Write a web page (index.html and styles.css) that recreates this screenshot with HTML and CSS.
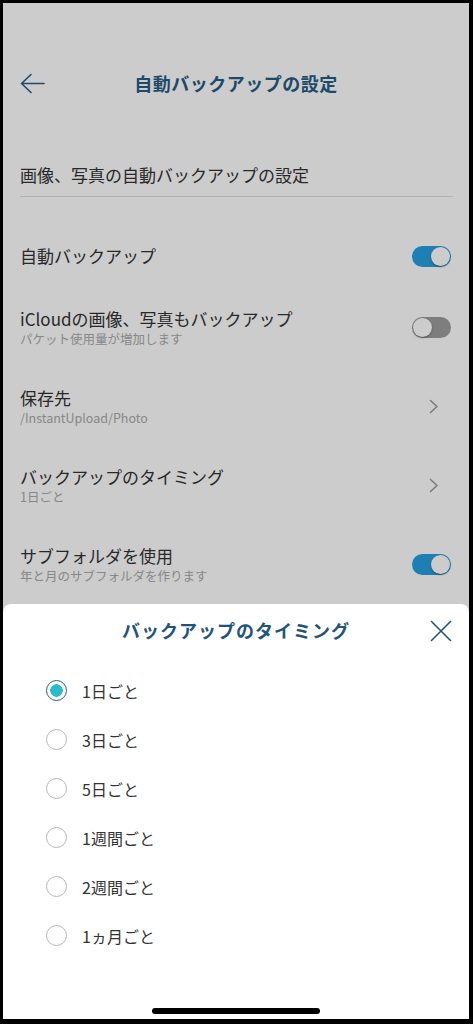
FILE: index.html
```html
<!DOCTYPE html>
<html lang="ja">
<head>
    <meta charset="UTF-8">
    <meta name="viewport" content="width=device-width, initial-scale=1.0">
    <title>自動バックアップの設定</title>
    <link rel="stylesheet" href="styles.css">
</head>
<body>
    <div class="screen">
        <div class="page">
            <header class="nav">
                <div class="nav-back">
                    <svg width="25" height="21" viewBox="0 0 25 21">
                        <path d="M24 10.5 H2 M11 1.5 L1.5 10.5 L11 19.5" fill="none" stroke="currentColor" stroke-width="1.6" stroke-linecap="round" stroke-linejoin="round"/>
                    </svg>
                </div>
                <h1 class="nav-title">自動バックアップの設定</h1>
                <div></div>
            </header>

            <section class="settings">
                <h2 class="settings-heading">画像、写真の自動バックアップの設定</h2>
                <ul class="setting-list">
                    <li class="setting-row">
                        <div class="setting-text">
                            <span class="setting-label">自動バックアップ</span>
                        </div>
                        <span class="toggle is-on"></span>
                    </li>
                    <li class="setting-row">
                        <div class="setting-text">
                            <span class="setting-label">iCloudの画像、写真もバックアップ</span>
                            <span class="setting-sub">パケット使用量が増加します</span>
                        </div>
                        <span class="toggle"></span>
                    </li>
                    <li class="setting-row">
                        <div class="setting-text">
                            <span class="setting-label">保存先</span>
                            <span class="setting-sub">/InstantUpload/Photo</span>
                        </div>
                        <svg class="chevron" width="10" height="15" viewBox="0 0 10 15">
                            <path d="M1.5 1.5 L8 7.5 L1.5 13.5" fill="none" stroke="currentColor" stroke-width="1.5" stroke-linecap="round" stroke-linejoin="round"/>
                        </svg>
                    </li>
                    <li class="setting-row">
                        <div class="setting-text">
                            <span class="setting-label">バックアップのタイミング</span>
                            <span class="setting-sub">1日ごと</span>
                        </div>
                        <svg class="chevron" width="10" height="15" viewBox="0 0 10 15">
                            <path d="M1.5 1.5 L8 7.5 L1.5 13.5" fill="none" stroke="currentColor" stroke-width="1.5" stroke-linecap="round" stroke-linejoin="round"/>
                        </svg>
                    </li>
                    <li class="setting-row">
                        <div class="setting-text">
                            <span class="setting-label">サブフォルダを使用</span>
                            <span class="setting-sub">年と月のサブフォルダを作ります</span>
                        </div>
                        <span class="toggle is-on"></span>
                    </li>
                </ul>
            </section>
        </div>

        <div class="dim"></div>

        <div class="sheet">
            <h2 class="sheet-title">バックアップのタイミング</h2>
            <div class="sheet-close">
                <svg width="22" height="22" viewBox="0 0 22 22">
                    <path d="M1.5 1.5 L20.5 20.5 M20.5 1.5 L1.5 20.5" fill="none" stroke="currentColor" stroke-width="1.6" stroke-linecap="round"/>
                </svg>
            </div>
            <ul class="radio-list">
                <li class="radio-item is-checked"><span class="radio"></span>1日ごと</li>
                <li class="radio-item"><span class="radio"></span>3日ごと</li>
                <li class="radio-item"><span class="radio"></span>5日ごと</li>
                <li class="radio-item"><span class="radio"></span>1週間ごと</li>
                <li class="radio-item"><span class="radio"></span>2週間ごと</li>
                <li class="radio-item"><span class="radio"></span>1ヵ月ごと</li>
            </ul>
            <div class="home-bar"></div>
        </div>
    </div>
</body>
</html>
```

FILE: styles.css
```css
body {
    margin: 0;
    padding: 3px 4px 5px 3px;
    background: #000;
    font-family: "Noto Sans CJK JP", "Noto Sans", sans-serif;
    color: #333;
}
ul {
    list-style: none;
    margin: 0;
    padding: 0;
}
.screen {
    position: relative;
    width: 466px;
    height: 1016px;
    background: #fff;
    overflow: hidden;
}

/* nav bar */
.nav {
    display: grid;
    grid-template-columns: 1fr auto 1fr;
    align-items: center;
    height: 56px;
    margin-top: 52px;
    padding: 0 17px;
    color: #275c85;
}
.nav-back {
    display: flex;
    align-items: center;
}
.nav-title {
    margin: 0;
    font-size: 18px;
    font-weight: 700;
    letter-spacing: 0.5px;
    line-height: 24px;
}

/* settings list */
.settings-heading {
    margin: 52px 16px 0 17px;
    padding-bottom: 9px;
    font-size: 17px;
    font-weight: 400;
    line-height: 24px;
    border-bottom: 1px solid #d8dfe6;
}
.setting-list {
    display: flex;
    flex-direction: column;
    gap: 39px;
    margin-top: 47px;
}
.setting-row {
    display: flex;
    align-items: center;
    justify-content: space-between;
    padding: 0 18px 0 17px;
}
.setting-text {
    display: flex;
    flex-direction: column;
}
.setting-label {
    font-size: 17px;
    line-height: 24px;
}
.setting-sub {
    font-size: 12.5px;
    line-height: 16px;
    color: #aaa;
}
.chevron {
    margin-right: 12px;
    color: #999;
}
.toggle {
    position: relative;
    width: 39px;
    height: 21px;
    border-radius: 11px;
    background: #9e9e9e;
}
.toggle::after {
    content: "";
    position: absolute;
    top: 1px;
    left: 1px;
    width: 19px;
    height: 19px;
    border-radius: 50%;
    background: #fff;
    box-shadow: 0 1px 2px rgba(0, 0, 0, 0.35);
}
.toggle.is-on {
    background: #269fe2;
}
.toggle.is-on::after {
    left: 19px;
}

/* dimmed backdrop and bottom sheet */
.dim {
    position: absolute;
    inset: 0;
    background: rgba(0, 0, 0, 0.2);
}
.sheet {
    position: absolute;
    left: 0;
    right: 0;
    bottom: 0;
    height: 415px;
    display: flex;
    flex-direction: column;
    background: #fff;
    border-radius: 8px 8px 0 0;
}
.sheet-title {
    margin: 14px 0 0;
    text-align: center;
    font-size: 18px;
    font-weight: 700;
    letter-spacing: 1px;
    line-height: 24px;
    color: #235378;
}
.sheet-close {
    position: absolute;
    top: 16px;
    right: 17px;
    color: #235378;
}
.radio-list {
    margin-top: 24px;
}
.radio-item {
    display: flex;
    align-items: center;
    gap: 15px;
    height: 49px;
    padding-left: 43px;
    font-size: 16px;
    color: #333;
}
.radio {
    box-sizing: border-box;
    width: 21px;
    height: 21px;
    border: 1.5px solid #b5b5b5;
    border-radius: 50%;
}
.is-checked .radio {
    border-color: #2a5f80;
    background: radial-gradient(circle, #2bbccc 0 6px, #fff 6.5px);
}
.home-bar {
    width: 168px;
    height: 6px;
    margin: auto auto 5px;
    border-radius: 3px;
    background: #000;
}
```
